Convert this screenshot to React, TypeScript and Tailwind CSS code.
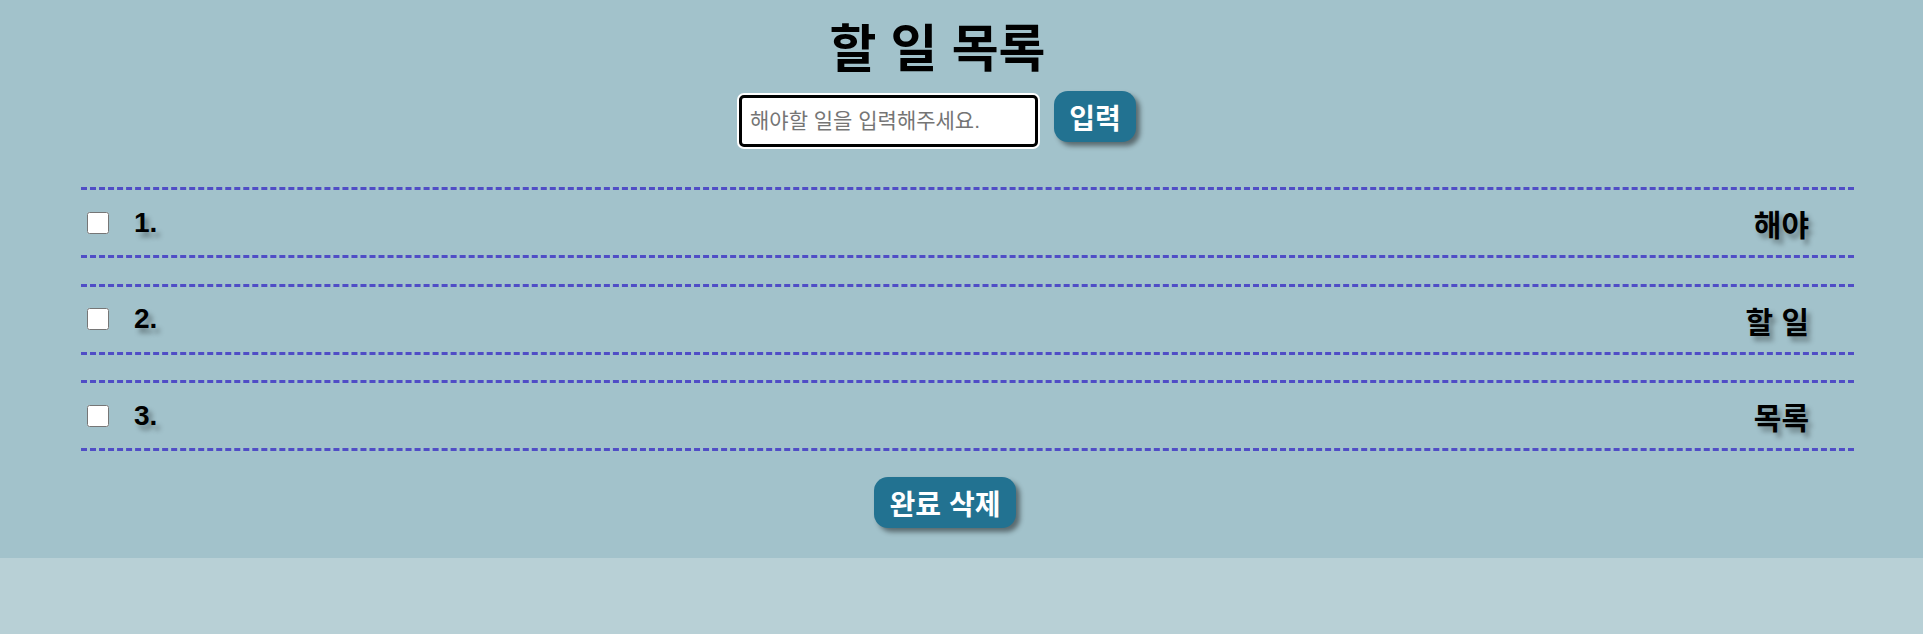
import React, { useState } from 'react'

const font = '[font-family:"Liberation_Sans","Noto_Sans_CJK_KR",sans-serif]'

type Todo = { id: number; text: string; done: boolean }

export default function App() {
  const [todos, setTodos] = useState<Todo[]>([
    { id: 1, text: '해야', done: false },
    { id: 2, text: '할 일', done: false },
    { id: 3, text: '목록', done: false },
  ])

  const toggle = (id: number) =>
    setTodos((list) =>
      list.map((t) => (t.id === id ? { ...t, done: !t.done } : t)),
    )

  return (
    <div className={`h-[634px] bg-[#b8d0d6] ${font}`}>
      <div className="bg-[#a2c2cb] pt-[17px] pb-[30px]">
        {/* Header */}
        <div className="flex flex-col items-center pr-[48px]">
          <h1 className="pt-[5px] text-[51px] leading-[56px] font-bold text-black">
            할 일 목록
          </h1>
          <div className="mt-[13px] flex items-start gap-[16px]">
            <input
              type="text"
              placeholder="해야할 일을 입력해주세요."
              className="mt-[4px] h-[52px] w-[299px] rounded-[5px] border-[3px] border-black bg-white px-[8px] text-[21px] text-black shadow-[0_0_0_2px_#ffffff] outline-none placeholder:text-[#757575]"
            />
            <button className="h-[51px] w-[82px] rounded-[14px] bg-[#227291] pt-[7px] text-[28px] leading-[36px] font-bold text-white shadow-[4px_4px_5px_rgba(0,0,0,0.45)]">
              입력
            </button>
          </div>
        </div>

        {/* List */}
        <ul className="mt-[40px] ml-[81px] mr-[69px] flex flex-col gap-[25.5px]">
          {todos.map((todo, i) => (
            <li
              key={todo.id}
              className="flex h-[71px] items-center justify-between border-y-[3px] border-dashed border-[#504dc6] pl-[6px] pr-[45px]"
            >
              <div className="flex items-center gap-[25px]">
                <input
                  type="checkbox"
                  checked={todo.done}
                  onChange={() => toggle(todo.id)}
                  className="h-[22px] w-[22px]"
                />
                <span className="text-[28px] font-bold text-black [text-shadow:4px_5px_5px_rgba(0,0,0,0.35)]">
                  {i + 1}.
                </span>
              </div>
              <span className="pt-[7px] text-[30px] leading-[40px] font-bold text-black [text-shadow:4px_5px_5px_rgba(0,0,0,0.35)]">
                {todo.text}
              </span>
            </li>
          ))}
        </ul>

        {/* Footer */}
        <div className="mt-[26px] flex justify-center pr-[48px]">
          <button className="ml-[15px] h-[51px] w-[142px] rounded-[14px] bg-[#227291] pt-[7px] text-[28px] leading-[36px] font-bold text-white shadow-[4px_4px_5px_rgba(0,0,0,0.45)]">
            완료 삭제
          </button>
        </div>
      </div>
    </div>
  )
}
